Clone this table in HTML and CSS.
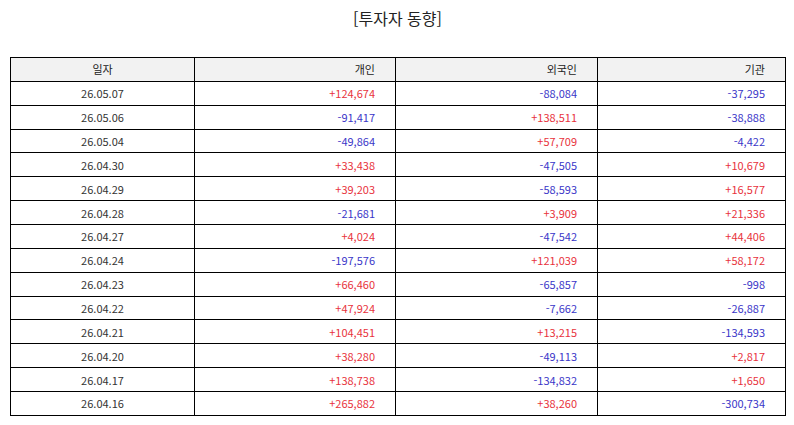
FILE: index.html
```html
<!DOCTYPE html>
<html lang="ko">
<head>
<meta charset="utf-8">
<link rel="stylesheet" href="styles.css">
</head>
<body>
<h1 class="title">[투자자 동향]</h1>
<table class="grid">
<colgroup><col class="c1"><col class="c2"><col class="c3"><col class="c4"></colgroup>
<thead>
<tr><th class="center">일자</th><th>개인</th><th>외국인</th><th>기관</th></tr>
</thead>
<tbody>
<tr><td class="center">26.05.07</td><td class="up">+124,674</td><td class="down">-88,084</td><td class="down">-37,295</td></tr>
<tr><td class="center">26.05.06</td><td class="down">-91,417</td><td class="up">+138,511</td><td class="down">-38,888</td></tr>
<tr><td class="center">26.05.04</td><td class="down">-49,864</td><td class="up">+57,709</td><td class="down">-4,422</td></tr>
<tr><td class="center">26.04.30</td><td class="up">+33,438</td><td class="down">-47,505</td><td class="up">+10,679</td></tr>
<tr><td class="center">26.04.29</td><td class="up">+39,203</td><td class="down">-58,593</td><td class="up">+16,577</td></tr>
<tr><td class="center">26.04.28</td><td class="down">-21,681</td><td class="up">+3,909</td><td class="up">+21,336</td></tr>
<tr><td class="center">26.04.27</td><td class="up">+4,024</td><td class="down">-47,542</td><td class="up">+44,406</td></tr>
<tr><td class="center">26.04.24</td><td class="down">-197,576</td><td class="up">+121,039</td><td class="up">+58,172</td></tr>
<tr><td class="center">26.04.23</td><td class="up">+66,460</td><td class="down">-65,857</td><td class="down">-998</td></tr>
<tr><td class="center">26.04.22</td><td class="up">+47,924</td><td class="down">-7,662</td><td class="down">-26,887</td></tr>
<tr><td class="center">26.04.21</td><td class="up">+104,451</td><td class="up">+13,215</td><td class="down">-134,593</td></tr>
<tr><td class="center">26.04.20</td><td class="up">+38,280</td><td class="down">-49,113</td><td class="up">+2,817</td></tr>
<tr><td class="center">26.04.17</td><td class="up">+138,738</td><td class="down">-134,832</td><td class="up">+1,650</td></tr>
<tr><td class="center">26.04.16</td><td class="up">+265,882</td><td class="up">+38,260</td><td class="down">-300,734</td></tr>
</tbody>
</table>
</body>
</html>
```
FILE: styles.css
```css
html, body {
  margin: 0;
  padding: 0;
  background: #ffffff;
}
body {
  font-family: "Noto Sans CJK KR", "Noto Sans", sans-serif;
  color: #333333;
  padding: 0 9px 0 10px;
}
.title {
  margin: 0;
  padding-top: 6px;
  height: 57px;
  box-sizing: border-box;
  text-align: center;
  font-size: 16px;
  font-weight: normal;
  line-height: 24px;
  color: #222222;
}
.grid {
  width: 775px;
  border-collapse: collapse;
  table-layout: fixed;
  font-size: 11px;
}
.c1 { width: 184px; }
.c2 { width: 201px; }
.c3 { width: 202px; }
.c4 { width: 188px; }
.grid th,
.grid td {
  border: 1px solid #000000;
  height: 23.87px;
  padding: 0 20px 0 4px;
  text-align: right;
  font-weight: normal;
  line-height: 14px;
  box-sizing: border-box;
}
.grid th {
  background: #f2f2f2;
  color: #222222;
}
.grid .center {
  text-align: center;
  padding: 0 4px;
}
.up { color: #e8323c; }
.down { color: #3a36c8; }
```
